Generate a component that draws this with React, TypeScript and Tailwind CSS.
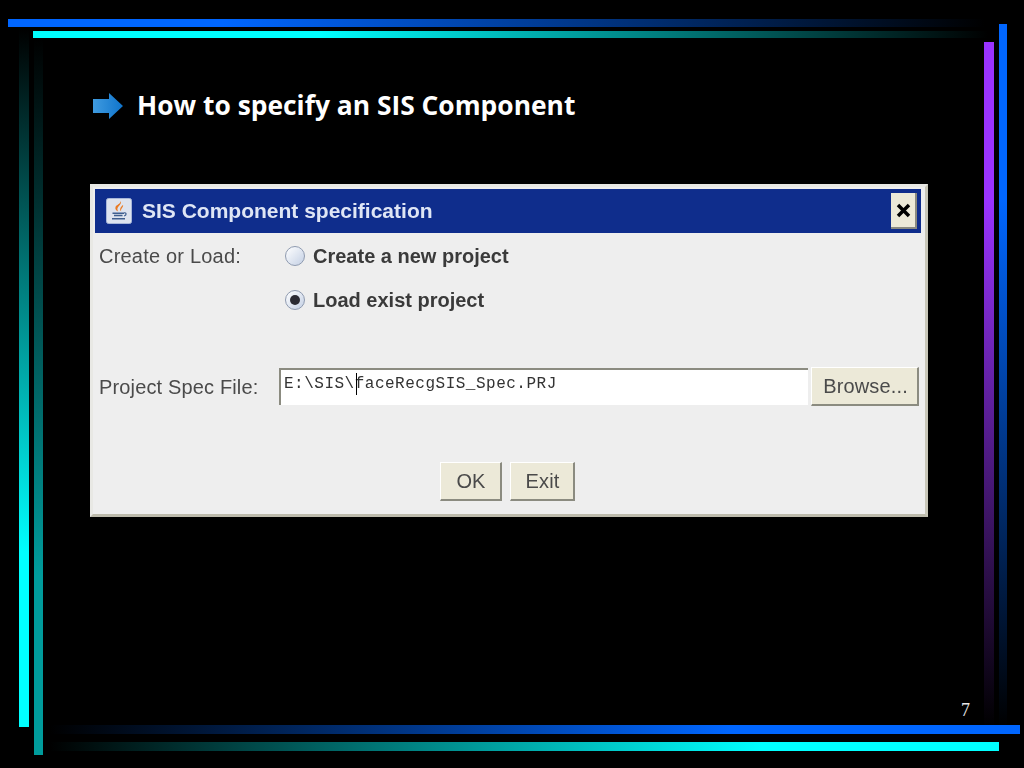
const dialogFont = { fontFamily: '"Liberation Sans", Arial, sans-serif' };

function JavaIcon() {
  return (
    <svg width="26" height="26" viewBox="0 0 26 26" className="shrink-0">
      <rect x="0.5" y="0.5" width="25" height="25" rx="2" fill="#dde3ee" stroke="#a8b6d8" />
      <path d="M14.500 3c2 3.500-4 5.500-3 9 .3 1 .9 1.500.9 1.500-2.600-.8-3.600-3-2.800-4.800C10.400 7 14.500 6 14.500 3z" fill="#ea7a22" />
      <path d="M17 7c.8 2.400-2.800 3.400-1.800 6.300-2-1.600-1-4 1.800-6.300z" fill="#ea7a22" />
      <path d="M6.500 15.200h11.500M8 17.600h8.500M6 20.800h13" stroke="#3f5f8f" strokeWidth="1.500" fill="none" />
      <path d="M18 14.800c2.600-.4 2.800 2.400.2 3" stroke="#3f5f8f" strokeWidth="1.200" fill="none" />
    </svg>
  );
}

function Radio({ checked }: { checked?: boolean }) {
  return (
    <span className="flex h-[20px] w-[20px] shrink-0 items-center justify-center rounded-full border border-[#8f9bb0] bg-gradient-to-br from-[#ffffff] to-[#c4d0e4]">
      {checked && <span className="h-[10px] w-[10px] rounded-full bg-[#2b2b33]" />}
    </span>
  );
}

function JButton({ label, className }: { label: string; className: string }) {
  return (
    <button
      className={`flex items-center justify-center border border-t-[#ffffff] border-l-[#ffffff] border-r-2 border-b-2 border-r-[#8b8b80] border-b-[#8b8b80] bg-[#ece9d8] pl-[2px] tracking-[0.15px] text-[#4a4a4a] ${className}`}
    >
      {label}
    </button>
  );
}

export default function App() {
  return (
    <div className="relative h-[768px] w-[1024px] overflow-hidden bg-black">
      {/* slide frame */}
      <div className="absolute left-[8px] top-[19px] h-[8px] w-[977px] bg-linear-to-r/srgb from-[#0066ff] from-22% to-[#000000]" />
      <div className="absolute left-[33px] top-[31px] h-[7px] w-[955px] bg-linear-to-r/srgb from-[#00ffff] from-30% to-[#000000]" />
      <div className="absolute left-[19px] top-[30px] h-[697px] w-[10px] bg-linear-to-t/srgb from-[#00ffff] from-25% to-[#000000]" />
      <div className="absolute left-[34px] top-[38px] h-[717px] w-[9px] bg-linear-to-t/srgb from-[#009c9c] from-25% to-[#000000]" />
      <div className="absolute left-[984px] top-[42px] h-[685px] w-[10px] bg-linear-to-b/srgb from-[#9933ff] from-23% to-[#000000]" />
      <div className="absolute left-[999px] top-[24px] h-[703px] w-[8px] bg-linear-to-b/srgb from-[#0066ff] from-25% to-[#000000]" />
      <div className="absolute left-[50px] top-[725px] h-[9px] w-[970px] bg-linear-to-l/srgb from-[#0066ff] from-30% to-[#000000]" />
      <div className="absolute left-[50px] top-[742px] h-[9px] w-[949px] bg-linear-to-l/srgb from-[#00ffff] from-25% to-[#000000]" />

      <div className="relative flex flex-col pl-[90px] pt-[88px]">
        <div className="flex h-[36px] items-center pl-[3px]">
          <svg width="31" height="28" viewBox="0 0 31 28" className="shrink-0">
            <defs>
              <linearGradient id="arrow" x1="0" y1="0" x2="1" y2="0">
                <stop offset="0" stopColor="#3f9be0" />
                <stop offset="1" stopColor="#0f74cc" />
              </linearGradient>
            </defs>
            <path d="M0 7h16V1l14 13-14 13v-6H0z" fill="url(#arrow)" />
          </svg>
          <h1
            className="ml-[13px] text-[26.4px] font-bold text-white"
            style={{ fontFamily: '"Open Sans", "Noto Sans", sans-serif' }}
          >
            How to specify an SIS Component
          </h1>
        </div>

        {/* dialog */}
        <div
          className="mt-[60px] h-[333px] w-[838px] border-[3px] border-[#e8e8e4] border-r-[#c8c6b8] border-b-[#bdbbac] bg-[#eeeeee] pt-[2px] blur-[0.5px]"
          style={dialogFont}
        >
          <div className="ml-[2px] flex h-[44px] w-[826px] items-center bg-[#0f2d8c] pl-[11px] pr-[4px]">
            <JavaIcon />
            <span className="ml-[10px] text-[21px] font-bold text-[#dfe6f5]">SIS Component specification</span>
            <button className="ml-auto flex h-[36px] w-[26px] items-center justify-center border-r-2 border-b-2 border-r-[#8b8b80] border-b-[#8b8b80] bg-[#ece9d8]">
              <svg width="15" height="15" viewBox="0 0 15 15">
                <path d="M2 2l11 11M13 2L2 13" stroke="#000" strokeWidth="3.500" />
              </svg>
            </button>
          </div>

          <div className="flex flex-col pl-[6px] pr-[6px] text-[#4a4a4a]">
            <div className="mt-[11px] flex h-[24px] items-center">
              <span className="w-[186px] text-[20px] tracking-[0.2px]">Create or Load:</span>
              <Radio />
              <span className="ml-[8px] text-[20px] font-bold text-[#3a3a3a]">Create a new project</span>
            </div>
            <div className="mt-[20px] flex h-[24px] items-center pl-[186px]">
              <Radio checked />
              <span className="ml-[8px] text-[20px] font-bold text-[#3a3a3a]">Load exist project</span>
            </div>
            <div className="mt-[55px] flex h-[39px] items-center">
              <span className="w-[180px] text-[20px] tracking-[0.15px]">Project Spec File:</span>
              <div className="relative flex h-[37px] w-[529px] items-start border-t-2 border-l-2 border-t-[#8b8b80] border-l-[#8b8b80] bg-white pl-[3px] pt-[2px]">
                <span
                  className="text-[16px] tracking-[0.5px] text-[#333333]"
                  style={{ fontFamily: '"Liberation Mono", monospace' }}
                >
                  E:\SIS\faceRecgSIS_Spec.PRJ
                </span>
                <span className="absolute left-[75px] top-[3px] h-[22px] w-[1px] bg-black" />
              </div>
              <JButton label="Browse..." className="ml-[3px] h-[39px] w-[108px] text-[20px]" />
            </div>
            <div className="mt-[56px] flex justify-center gap-[8px] pr-[4px]">
              <JButton label="OK" className="h-[39px] w-[62px] text-[20px]" />
              <JButton label="Exit" className="h-[39px] w-[65px] text-[20px]" />
            </div>
          </div>
        </div>

        <span
          className="absolute left-[961px] top-[697px] text-[18px] text-[#e8e8e8]"
          style={{ fontFamily: '"Liberation Serif", serif' }}
        >
          7
        </span>
      </div>
    </div>
  );
}
